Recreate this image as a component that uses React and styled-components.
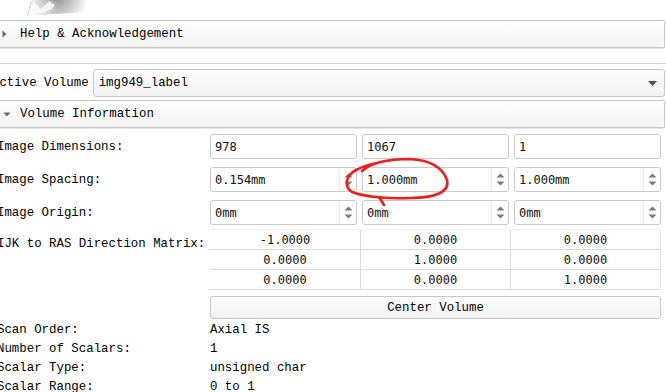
import React from "react";
import styled, { createGlobalStyle } from "styled-components";

const Global = createGlobalStyle`
  html, body { margin: 0; padding: 0; background: #fff; }
  body { width: 666px; height: 392px; overflow: hidden; }
`;

const Page = styled.div`
  position: relative;
  width: 666px;
  height: 392px;
  overflow: hidden;
  font-family: "Liberation Mono", "Courier New", monospace;
  font-size: 12.4px;
  color: #000;
`;

const LogoArea = styled.div`
  height: 20px;
  display: flex;
`;

const SectionHeader = styled.div`
  height: 28px;
  box-sizing: border-box;
  margin-right: 1px;
  margin-top: ${(p) => p.$mt || 0}px;
  display: flex;
  align-items: center;
  border: 1px solid #c6c6c6;
  border-left: none;
  border-radius: 0 2px 2px 0;
  background: linear-gradient(#fefefe, #f3f3f3);
  box-shadow: 0 1px 0 #e6e6e6;
`;

const ArrowBox = styled.span`
  width: 20px;
  height: 100%;
  display: flex;
  align-items: center;
  padding-left: ${(p) => (p.$open ? 3 : 2)}px;
  box-sizing: border-box;
`;

const Panel = styled.div`
  margin-top: 15px;
  border-top: 1px solid #cfcfcf;
  padding-top: 5px;
`;

const ActiveRow = styled.div`
  display: flex;
  align-items: center;
  gap: 4px;
  margin-left: -8px;
  margin-right: 1px;
`;

const Label = styled.span`
  white-space: nowrap;
  margin-left: ${(p) => p.$ml ?? -3}px;
  align-self: ${(p) => (p.$top ? "flex-start" : "center")};
  padding-top: ${(p) => (p.$top ? 8 : 0)}px;
`;

const Combo = styled.div`
  flex: 1;
  height: 28px;
  box-sizing: border-box;
  border: 1px solid #c6c6c6;
  border-radius: 3px;
  background: linear-gradient(#fdfdfd, #f2f2f2);
  display: flex;
  align-items: center;
  justify-content: space-between;
  padding: 0 7px 0 5px;
`;

const Form = styled.div`
  display: flex;
  flex-direction: column;
  margin-top: 6px;
`;

const Row = styled.div`
  display: grid;
  grid-template-columns: 210px 1fr;
  align-items: center;
  margin-top: ${(p) => p.$mt || 0}px;
  margin-right: 5px;
`;

const Trio = styled.div`
  display: grid;
  grid-template-columns: repeat(3, 1fr);
  gap: 5px;
`;

const Field = styled.div`
  height: 25px;
  box-sizing: border-box;
  border: 1px solid #c9c9c9;
  border-radius: 3px;
  background: #fff;
  display: flex;
  align-items: center;
  padding-left: 4px;
  font-family: "DejaVu Sans Mono", monospace;
  font-size: 12px;
  color: #111;
`;

const FieldText = styled.span`
  flex: 1;
  white-space: pre;
`;

const Spin = styled.span`
  width: 16px;
  height: 100%;
  border-left: 1px solid #ececec;
  display: flex;
  flex-direction: column;
  align-items: center;
  justify-content: center;
  gap: 3px;
`;

const Matrix = styled.div`
  display: grid;
  grid-template-columns: repeat(3, 1fr);
  border-top: 1px solid #efefef;
  border-right: 1px solid #e6e6e6;
`;

const Cell = styled.div`
  height: 20px;
  box-sizing: border-box;
  border-bottom: 1px solid #d9d9d9;
  border-left: ${(p) => (p.$first ? "none" : "1px solid #d9d9d9")};
  display: flex;
  align-items: center;
  justify-content: center;
  font-family: "DejaVu Sans Mono", monospace;
  font-size: 12px;
  white-space: pre;
  color: #111;
`;

const Button = styled.div`
  grid-column: 2;
  height: 23px;
  box-sizing: border-box;
  border: 1px solid #c6c6c6;
  border-radius: 3px;
  background: linear-gradient(#fdfdfd, #f1f1f1);
  display: flex;
  align-items: center;
  justify-content: center;
`;

const Info = styled.div`
  display: grid;
  grid-template-columns: 210px 1fr;
  line-height: 19px;
  margin-top: 2px;
`;

const Overlay = styled.svg`
  position: absolute;
  left: 0;
  top: 0;
  pointer-events: none;
`;

const SpinArrows = () => (
  <Spin>
    <svg width="9" height="5" viewBox="0 0 9 5"><path d="M0.5 4.5 L4.5 0.5 L8.5 4.5 Z" fill="#7a7a7a" /></svg>
    <svg width="9" height="5" viewBox="0 0 9 5"><path d="M0.5 0.5 L4.5 4.5 L8.5 0.5 Z" fill="#7a7a7a" /></svg>
  </Spin>
);

const NumField = ({ value, spin }) => (
  <Field>
    <FieldText>{value}</FieldText>
    {spin && <SpinArrows />}
  </Field>
);

const matrix = [
  ["-1.0000", "0.0000", "0.0000"],
  ["0.0000", "1.0000", "0.0000"],
  ["0.0000", "0.0000", "1.0000"],
];

const info = [
  ["Scan Order:", "Axial IS"],
  ["Number of Scalars:", "1"],
  ["Scalar Type:", "unsigned char"],
  ["Scalar Range:", "0 to 1"],
];

export default function App() {
  return (
    <Page>
      <Global />
      <LogoArea>
        <svg width="120" height="20" viewBox="0 0 120 20">
          <defs>
            <radialGradient id="sh" cx="58" cy="-2" r="30" gradientUnits="userSpaceOnUse">
              <stop offset="0" stopColor="#949494" />
              <stop offset="0.5" stopColor="#cacaca" />
              <stop offset="1" stopColor="#ffffff" />
            </radialGradient>
          </defs>
          <path d="M27 16 L31 0 L90 0 L85 12 Z" fill="url(#sh)" />
          <path d="M30 14 L34 2 L41 9 L49 1 L55 5 L52 9 L44 13 Z" fill="#fafafa" opacity="0.9" />
          <path d="M27.5 16 L31 1" stroke="#d0d0d0" strokeWidth="1" fill="none" />
        </svg>
      </LogoArea>

      <SectionHeader>
        <ArrowBox>
          <svg width="5" height="8" viewBox="0 0 5 8"><path d="M0.5 0.5 L4.5 4 L0.5 7.5 Z" fill="#6a6a6a" /></svg>
        </ArrowBox>
        Help &amp; Acknowledgement
      </SectionHeader>

      <Panel>
        <ActiveRow>
          <Label $ml={0}>Active Volume</Label>
          <Combo>
            <span>img949_label</span>
            <svg width="9" height="5" viewBox="0 0 9 5"><path d="M0 0 L9 0 L4.5 5 Z" fill="#505050" /></svg>
          </Combo>
        </ActiveRow>

        <SectionHeader $mt={3}>
          <ArrowBox $open>
            <svg width="8" height="5" viewBox="0 0 8 5"><path d="M0.5 0.5 L7.5 0.5 L4 4.5 Z" fill="#6a6a6a" /></svg>
          </ArrowBox>
          Volume Information
        </SectionHeader>

        <Form>
          <Row>
            <Label>Image Dimensions:</Label>
            <Trio>
              <NumField value="978" />
              <NumField value="1067" />
              <NumField value="1" />
            </Trio>
          </Row>
          <Row $mt={8}>
            <Label>Image Spacing:</Label>
            <Trio>
              <NumField value="0.154mm" spin />
              <NumField value="1.000mm" spin />
              <NumField value="1.000mm" spin />
            </Trio>
          </Row>
          <Row $mt={8}>
            <Label>Image Origin:</Label>
            <Trio>
              <NumField value="0mm" spin />
              <NumField value="0mm" spin />
              <NumField value="0mm" spin />
            </Trio>
          </Row>
          <Row $mt={4}>
            <Label $top>IJK to RAS Direction Matrix:</Label>
            <Matrix>
              {matrix.map((r, i) =>
                r.map((v, j) => (
                  <Cell key={i + "-" + j} $first={j === 0}>{v}</Cell>
                ))
              )}
            </Matrix>
          </Row>
          <Row $mt={6}>
            <Button>Center Volume</Button>
          </Row>
          <Info>
            {info.map(([k, v]) => (
              <React.Fragment key={k}>
                <Label>{k}</Label>
                <span>{v}</span>
              </React.Fragment>
            ))}
          </Info>
        </Form>
      </Panel>

      <Overlay width="666" height="392" viewBox="0 0 666 392">
        <path
          d="M362 171 C372 162, 392 159, 410 159 C428 160, 442 166, 447 180 C450 192, 435 198, 410 198 C390 199, 365 197, 352 192 C344 187, 345 176, 356 170 C362 167, 370 164, 378 163"
          stroke="#f21a1a"
          strokeWidth="2.6"
          fill="none"
          strokeLinecap="round"
        />
        <path d="M379 197 L384 205" stroke="#f21a1a" strokeWidth="2.6" strokeLinecap="round" fill="none" />
      </Overlay>
    </Page>
  );
}
